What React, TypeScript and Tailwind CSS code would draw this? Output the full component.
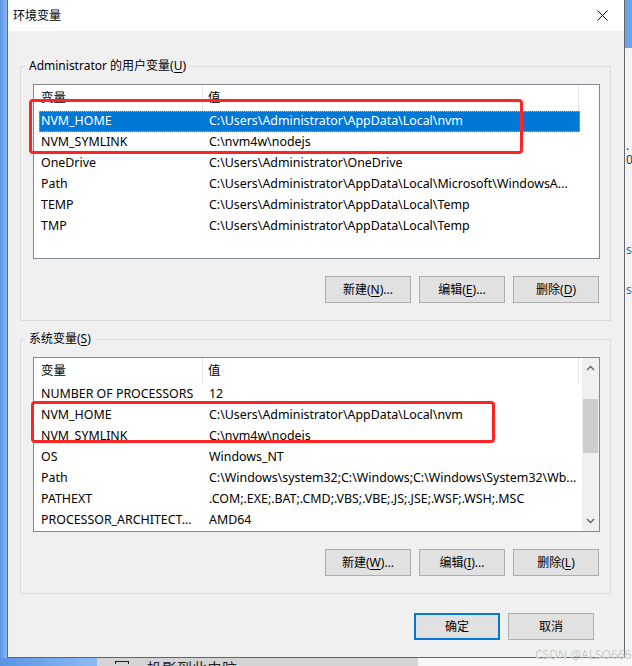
import React from 'react';

const font = { fontFamily: '"Noto Sans", "Noto Sans CJK SC", sans-serif' };

type Row = { name: string; value: string; selected?: boolean };

const userVars: Row[] = [
  { name: 'NVM_HOME', value: 'C:\\Users\\Administrator\\AppData\\Local\\nvm', selected: true },
  { name: 'NVM_SYMLINK', value: 'C:\\nvm4w\\nodejs' },
  { name: 'OneDrive', value: 'C:\\Users\\Administrator\\OneDrive' },
  { name: 'Path', value: 'C:\\Users\\Administrator\\AppData\\Local\\Microsoft\\WindowsA...' },
  { name: 'TEMP', value: 'C:\\Users\\Administrator\\AppData\\Local\\Temp' },
  { name: 'TMP', value: 'C:\\Users\\Administrator\\AppData\\Local\\Temp' },
];

const systemVars: Row[] = [
  { name: 'NUMBER OF PROCESSORS', value: '12' },
  { name: 'NVM_HOME', value: 'C:\\Users\\Administrator\\AppData\\Local\\nvm' },
  { name: 'NVM_SYMLINK', value: 'C:\\nvm4w\\nodejs' },
  { name: 'OS', value: 'Windows_NT' },
  { name: 'Path', value: 'C:\\Windows\\system32;C:\\Windows;C:\\Windows\\System32\\Wb...' },
  { name: 'PATHEXT', value: '.COM;.EXE;.BAT;.CMD;.VBS;.VBE;.JS;.JSE;.WSF;.WSH;.MSC' },
  { name: 'PROCESSOR_ARCHITECT...', value: 'AMD64' },
];

function Mn({ label, k, tail }: { label: string; k: string; tail?: string }) {
  return (
    <span>
      {label}(<span className="underline underline-offset-2">{k}</span>){tail}
    </span>
  );
}

function Btn({ children, primary }: { children: React.ReactNode; primary?: boolean }) {
  return (
    <div
      className={
        'w-[86px] h-[27px] flex items-center justify-center bg-[#e1e1e1] text-[12px] text-black ' +
        (primary ? 'border-2 border-[#0078d7]' : 'border border-[#adadad]')
      }
    >
      {children}
    </div>
  );
}

function VarList({
  rows,
  scroll,
  mark,
}: {
  rows: Row[];
  scroll?: boolean;
  mark: { left: number; top: number; width: number; height: number };
}) {
  return (
    <div className="relative w-[567px] h-[175px] border border-[#828790] bg-white">
      <div className="flex h-full overflow-hidden">
        <div className="flex-1 flex flex-col">
          <div className="h-[26px] flex shrink-0 text-[12.4px] text-black">
            <div className="w-[169px] pl-[7px] flex items-center border-r border-[#e5e5e5]">变量</div>
            <div className="w-[376px] pl-[5px] flex items-center border-r border-[#e5e5e5]">值</div>
          </div>
          {rows.map((r, i) => (
            <div
              key={i}
              className={
                'ml-[5px] w-[541px] h-[21px] shrink-0 flex items-center text-[12.4px] whitespace-nowrap ' +
                (r.selected
                  ? 'bg-[#0078d7] text-white outline outline-1 outline-dotted outline-[#f5a04a] -outline-offset-1'
                  : 'text-black')
              }
            >
              <div className="w-[164px] pl-[2px] overflow-hidden">{r.name}</div>
              <div className="flex-1 pl-[6px] overflow-hidden">{r.value}</div>
            </div>
          ))}
        </div>
        {scroll && (
          <div className="w-[17px] h-full bg-[#f0f0f0] flex flex-col items-center shrink-0">
            <div className="h-[20px] w-full flex items-center justify-center">
              <svg width="9" height="6" viewBox="0 0 9 6">
                <path d="M1 5 L4.5 1.5 L8 5" fill="none" stroke="#606060" strokeWidth="1.3" />
              </svg>
            </div>
            <div className="h-[21px]" />
            <div className="w-[15px] h-[54px] bg-[#cdcdcd]" />
            <div className="flex-1" />
            <div className="h-[20px] w-full flex items-center justify-center">
              <svg width="9" height="6" viewBox="0 0 9 6">
                <path d="M1 1 L4.5 4.5 L8 1" fill="none" stroke="#606060" strokeWidth="1.3" />
              </svg>
            </div>
          </div>
        )}
      </div>
      <div
        className="absolute border-[3px] border-[#ff2424] rounded-[4px] pointer-events-none"
        style={{ left: mark.left, top: mark.top, width: mark.width, height: mark.height }}
      />
    </div>
  );
}

function Group({
  legend,
  children,
}: {
  legend: React.ReactNode;
  children: React.ReactNode;
}) {
  return (
    <fieldset className="border border-[#dcdcdc] w-[591px] pl-[12px] pr-[10px] pb-[17px]">
      <legend className="-ml-[8px] px-[4px] text-[12px] leading-[16px] text-black">{legend}</legend>
      <div className="mt-[10px]">{children}</div>
    </fieldset>
  );
}

export default function App() {
  return (
    <div className="relative w-[632px] h-[666px] overflow-hidden bg-white" style={font}>
      <div className="flex h-[658px]">
        <div className="w-[7px] bg-gradient-to-r from-[#5a93e2] to-[#8dbbf0]" />
        <div className="w-[618px] flex flex-col bg-[#f0f0f0] border border-[#5f6670] border-t-0">
          <div className="h-[31px] bg-white flex items-center justify-between pl-[5px] pr-[16px] shrink-0">
            <span className="text-[12px] text-black">环境变量</span>
            <svg width="11" height="11" viewBox="0 0 11 11">
              <path d="M0.5 0.5 L10.5 10.5 M10.5 0.5 L0.5 10.5" stroke="#111" strokeWidth="1" />
            </svg>
          </div>
          <div className="pl-[12px] pt-[27px] flex flex-col">
            <Group
              legend={
                <span>
                  Administrator 的用户变量(<span className="underline underline-offset-2">U</span>)
                </span>
              }
            >
              <VarList rows={userVars} mark={{ left: -5, top: 14, width: 494, height: 55 }} />
              <div className="mt-[17px] flex justify-end gap-[8px] pr-[1px]">
                <Btn><Mn label="新建" k="N" tail="..." /></Btn>
                <Btn><Mn label="编辑" k="E" tail="..." /></Btn>
                <Btn><Mn label="删除" k="D" /></Btn>
              </div>
            </Group>
            <div className="h-[10px]" />
            <Group
              legend={
                <span>
                  系统变量(<span className="underline underline-offset-2">S</span>)
                </span>
              }
            >
              <VarList rows={systemVars} scroll mark={{ left: -3, top: 43, width: 464, height: 42 }} />
              <div className="mt-[17px] flex justify-end gap-[8px] pr-[1px]">
                <Btn><Mn label="新建" k="W" tail="..." /></Btn>
                <Btn><Mn label="编辑" k="I" tail="..." /></Btn>
                <Btn><Mn label="删除" k="L" /></Btn>
              </div>
            </Group>
            <div className="mt-[19px] flex justify-end gap-[8px] pr-[30px]">
              <Btn primary>确定</Btn>
              <Btn>取消</Btn>
            </div>
          </div>
        </div>
        <div className="flex-1 flex flex-col text-[12px] leading-[14px] overflow-hidden">
          <div className="h-[48px] bg-[#6aa3ea] shrink-0" />
          <div className="flex-1 bg-[#f3f3f3] flex flex-col pl-[1px]">
            <div className="h-[91px]" />
            <div className="text-[#333] whitespace-nowrap">. .</div>
            <div className="text-[#333] whitespace-nowrap">0(</div>
            <div className="h-[76px]" />
            <div className="text-[#1a6fc9] whitespace-nowrap">s</div>
            <div className="h-[26px]" />
            <div className="text-[#1a6fc9] whitespace-nowrap">sc</div>
          </div>
        </div>
      </div>
      <div className="flex h-[8px] overflow-hidden">
        <div className="w-[97px] bg-gradient-to-r from-[#5a93e2] to-[#8dbbf0]" />
        <div className="w-[321px] bg-[#d4d4d4] flex items-start pl-[18px] text-[15px] leading-[20px] text-[#222] pt-[1px]">
          <span className="w-[14px] h-[3px] border-t border-x border-[#222] mt-[2px]" />
          <span className="ml-[18px] mt-[-1px]">投影到此电脑</span>
        </div>
        <div className="flex-1 bg-[#f7f7f7]" />
      </div>
      <div className="absolute left-[535px] top-[646px] text-[12px] text-[#c9c9c9] [text-shadow:0_0_1px_#fff] whitespace-nowrap">
        CSDN @ALSO666
      </div>
    </div>
  );
}
